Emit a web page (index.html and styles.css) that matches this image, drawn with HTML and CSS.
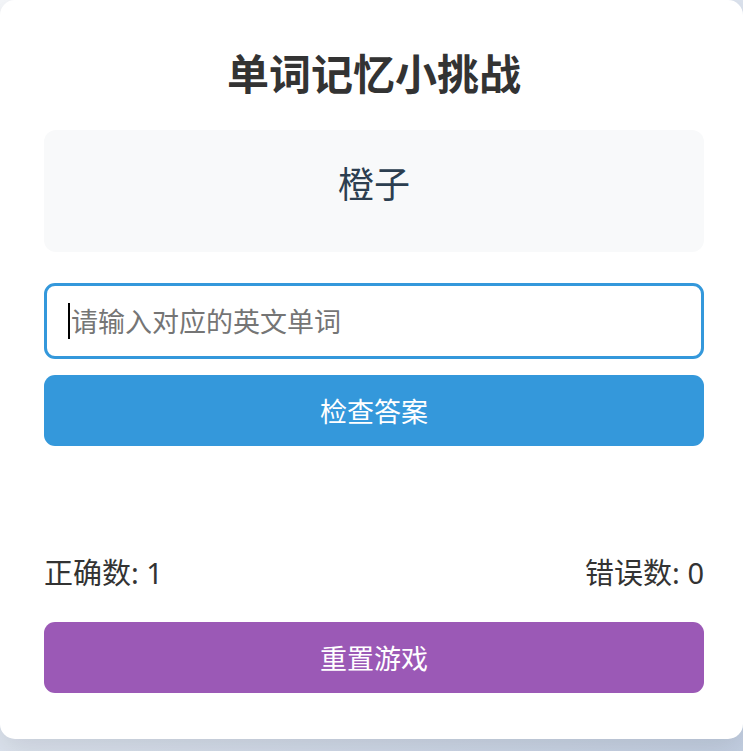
FILE: index.html
```html
<!DOCTYPE html>
<html lang="zh-CN">
<head>
<meta charset="utf-8">
<title>单词记忆小挑战</title>
<link rel="stylesheet" href="styles.css">
</head>
<body>
<div class="card">
  <h1 class="title">单词记忆小挑战</h1>
  <div class="word-box">橙子</div>
  <div class="input-wrap">
    <input class="answer" type="text" placeholder="请输入对应的英文单词">
    <span class="caret"></span>
  </div>
  <button class="btn btn-check" type="button">检查答案</button>
  <div class="feedback"></div>
  <div class="score">
    <span class="score-item">正确数: 1</span>
    <span class="score-item">错误数: 0</span>
  </div>
  <button class="btn btn-reset" type="button">重置游戏</button>
</div>
</body>
</html>
```
FILE: styles.css
```css
html, body {
  margin: 0;
  padding: 0;
}
body {
  min-height: 100vh;
  background: linear-gradient(135deg, #f5f7fa 0%, #c3cfe2 100%);
  font-family: "Noto Sans", "Noto Sans CJK SC", sans-serif;
  color: #333;
}
.card {
  background: #fff;
  border-radius: 15px;
  box-shadow: 0 10px 30px rgba(0, 0, 0, 0.1);
  padding: 49px 39px 46px 44px;
  display: flex;
  flex-direction: column;
}
.title {
  margin: 0 0 31px;
  font-size: 42px;
  line-height: 50px;
  font-weight: 700;
  text-align: center;
  color: #333;
}
.word-box {
  background: #f8f9fa;
  border-radius: 12px;
  padding: 30px 20px 42px;
  font-size: 36px;
  line-height: 50px;
  text-align: center;
  color: #2c3e50;
}
.input-wrap {
  position: relative;
  margin-top: 31px;
}
.answer {
  display: block;
  box-sizing: border-box;
  height: 76px;
  width: 100%;
  border: 3px solid #3498db;
  border-radius: 11px;
  padding: 0 22px 0 24px;
  font-family: inherit;
  font-size: 27px;
  color: #333;
  outline: none;
  background: #fff;
}
.answer::placeholder {
  color: #757575;
}
.caret {
  position: absolute;
  left: 24px;
  top: 20px;
  width: 2px;
  height: 36px;
  background: #000;
}
.btn {
  box-sizing: border-box;
  height: 71px;
  width: 100%;
  border: none;
  border-radius: 11px;
  color: #fff;
  font-family: inherit;
  font-size: 27px;
  cursor: pointer;
}
.btn-check {
  margin-top: 16px;
  background: #3498db;
}
.btn-reset {
  margin-top: 29px;
  background: #9b59b6;
}
.feedback {
  height: 107px;
}
.score {
  display: flex;
  justify-content: space-between;
  font-size: 29px;
  line-height: 40px;
  color: #333;
}
```
